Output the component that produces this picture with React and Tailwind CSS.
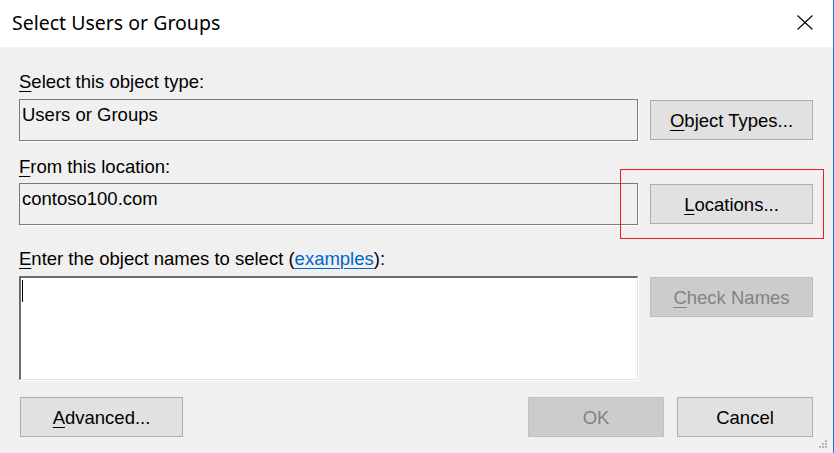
import React from "react";

function Btn({ children, w = "w-[163px]", disabled = false, className = "" }) {
  return (
    <div
      className={`${w} h-[40px] shrink-0 flex items-center justify-center border leading-[21px] ${
        disabled
          ? "bg-[#cccccc] border-[#bfbfbf] text-[#838383]"
          : "bg-[#e1e1e1] border-[#adadad] text-black"
      } ${className}`}
    >
      {children}
    </div>
  );
}

function U({ children }) {
  return <span className="underline underline-offset-[3px] decoration-1">{children}</span>;
}

export default function App() {
  return (
    <div className="w-[834px] h-[453px] bg-[#f0f0f0] border-r border-[#1a7bd0] relative flex flex-col overflow-hidden text-[18.5px] text-black font-['Liberation_Sans',Arial,sans-serif]">
      {/* Title bar */}
      <div className="h-[47px] shrink-0 bg-white flex items-start justify-between pl-[12px] pr-[20px]">
        <div className="mt-[10px] leading-[26px] text-[19.5px] font-['Noto_Sans','Open_Sans',sans-serif] text-black">
          Select Users or Groups
        </div>
        <svg width="16" height="15" viewBox="0 0 16 15" className="mt-[15px]">
          <line x1="0.5" y1="0.5" x2="15.5" y2="14.5" stroke="#000" strokeWidth="1.1" />
          <line x1="15.5" y1="0.5" x2="0.5" y2="14.5" stroke="#000" strokeWidth="1.1" />
        </svg>
      </div>

      {/* Body */}
      <div className="pl-[19px] flex flex-col">
        <div className="mt-[24px] h-[21px] leading-[21px]">
          <U>S</U>elect this object type:
        </div>
        <div className="mt-[7px] flex items-start gap-[12px]">
          <div className="w-[619px] h-[42px] border border-[#7a7a7a] shadow-[1px_1px_0_#ffffff] pl-[2px] pt-[4px] leading-[21px]">
            Users or Groups
          </div>
          <Btn className="mt-[1px]">
            <span>
              <U>O</U>bject Types...
            </span>
          </Btn>
        </div>

        <div className="mt-[15px] h-[21px] leading-[21px]">
          <U>F</U>rom this location:
        </div>
        <div className="mt-[6px] flex items-start gap-[12px]">
          <div className="w-[619px] h-[42px] border border-[#7a7a7a] shadow-[1px_1px_0_#ffffff] pl-[2px] pt-[4px] leading-[21px]">
            contoso100.com
          </div>
          <Btn className="mt-[1px]">
            <span>
              <U>L</U>ocations...
            </span>
          </Btn>
        </div>

        <div className="mt-[23px] h-[21px] leading-[21px]">
          <U>E</U>nter the object names to select (
          <span className="text-[#0066cc] underline underline-offset-[3px] decoration-1">examples</span>):
        </div>
        <div className="mt-[7px] flex items-start gap-[12px]">
          <div className="w-[619px] h-[104px] bg-white border-t-2 border-l-2 border-t-[#6d6d6d] border-l-[#6d6d6d] border-r border-b border-r-[#e3e3e3] border-b-[#e3e3e3] shadow-[1px_1px_0_#ffffff]">
            <div className="ml-[1px] mt-[2px] w-px h-[22px] bg-black" />
          </div>
          <Btn disabled className="mt-[1px]">
            <span>
              <U>C</U>heck Names
            </span>
          </Btn>
        </div>

        <div className="mt-[17px] w-[794px] flex items-start justify-between">
          <Btn className="ml-[1px]">
            <span>
              <U>A</U>dvanced...
            </span>
          </Btn>
          <div className="flex gap-[13px]">
            <Btn w="w-[136px]" disabled>
              OK
            </Btn>
            <Btn w="w-[136px]">Cancel</Btn>
          </div>
        </div>
      </div>

      {/* Red annotation rectangle */}
      <div className="absolute left-[620px] top-[169px] w-[204px] h-[70px] border border-[#ed1c24] pointer-events-none" />

      {/* Resize grip */}
      <svg width="8" height="8" viewBox="0 0 8 8" className="absolute left-[819px] top-[440px]">
        <rect x="6" y="0" width="2" height="2" fill="#b4b4b4" />
        <rect x="3" y="3" width="2" height="2" fill="#b4b4b4" />
        <rect x="6" y="3" width="2" height="2" fill="#b4b4b4" />
        <rect x="0" y="6" width="2" height="2" fill="#b4b4b4" />
        <rect x="3" y="6" width="2" height="2" fill="#b4b4b4" />
        <rect x="6" y="6" width="2" height="2" fill="#b4b4b4" />
      </svg>
    </div>
  );
}
